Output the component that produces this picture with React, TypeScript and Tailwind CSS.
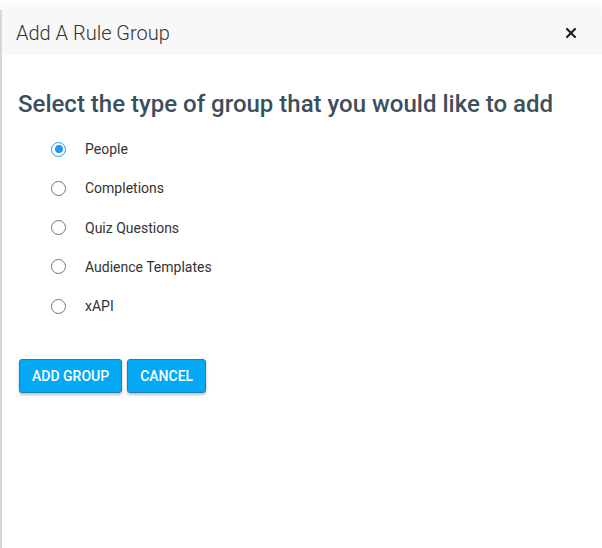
import React, { useState } from 'react';

const options = ['People', 'Completions', 'Quiz Questions', 'Audience Templates', 'xAPI'];

const App: React.FC = () => {
  const [selected, setSelected] = useState('People');

  return (
    <div className="w-[602px] h-[548px] bg-white pt-[10px] overflow-hidden" style={{ fontFamily: 'Roboto, "Liberation Sans", sans-serif' }}>
      <div className="h-full bg-white border-l-[2px] border-[#d6d6d6] shadow-[0_-4px_10px_rgba(0,0,0,0.05)] flex flex-col">
        {/* header */}
        <div className="h-[45px] bg-[#f8f8f8] flex items-center justify-between pl-[14px] pr-[26px]">
          <h2 className="text-[20px] font-light text-[#333] leading-none">Add A Rule Group</h2>
          <button className="text-[#222] leading-none">
            <svg width="10" height="10" viewBox="0 0 10 10">
              <path d="M1 1L9 9M9 1L1 9" stroke="currentColor" strokeWidth="2.2" strokeLinecap="square" />
            </svg>
          </button>
        </div>

        {/* body */}
        <div className="pl-[16px] pt-[37px]">
          <h3 className="text-[24px] font-medium text-[#3d4f5c] leading-none">
            Select the type of group that you would like to add
          </h3>

          <div className="mt-[25px] pl-[33px] flex flex-col gap-[23.3px]">
            {options.map((opt) => (
              <label key={opt} className="flex items-center cursor-pointer h-[16px]" onClick={() => setSelected(opt)}>
                {selected === opt ? (
                  <span className="w-[15px] h-[15px] rounded-full border-[1.5px] border-[#2196f3] flex items-center justify-center">
                    <span className="w-[8px] h-[8px] rounded-full bg-[#2196f3]" />
                  </span>
                ) : (
                  <span className="w-[15px] h-[15px] rounded-full border-[1.5px] border-[#5f7a8c]" />
                )}
                <span className="ml-[19px] text-[14px] text-[#333] leading-none">{opt}</span>
              </label>
            ))}
          </div>

          <div className="mt-[45px] pl-[1px] flex gap-[5px]">
            <button className="h-[34px] px-[12px] bg-[#03a9f4] border border-[#1a7fb5] rounded-[3px] text-white text-[14px] font-medium uppercase shadow-[0_2px_3px_rgba(0,0,0,0.25)]">
              Add Group
            </button>
            <button className="h-[34px] px-[12px] bg-[#03a9f4] border border-[#1a7fb5] rounded-[3px] text-white text-[14px] font-medium uppercase shadow-[0_2px_3px_rgba(0,0,0,0.25)]">
              Cancel
            </button>
          </div>
        </div>
      </div>
    </div>
  );
};

export default App;
